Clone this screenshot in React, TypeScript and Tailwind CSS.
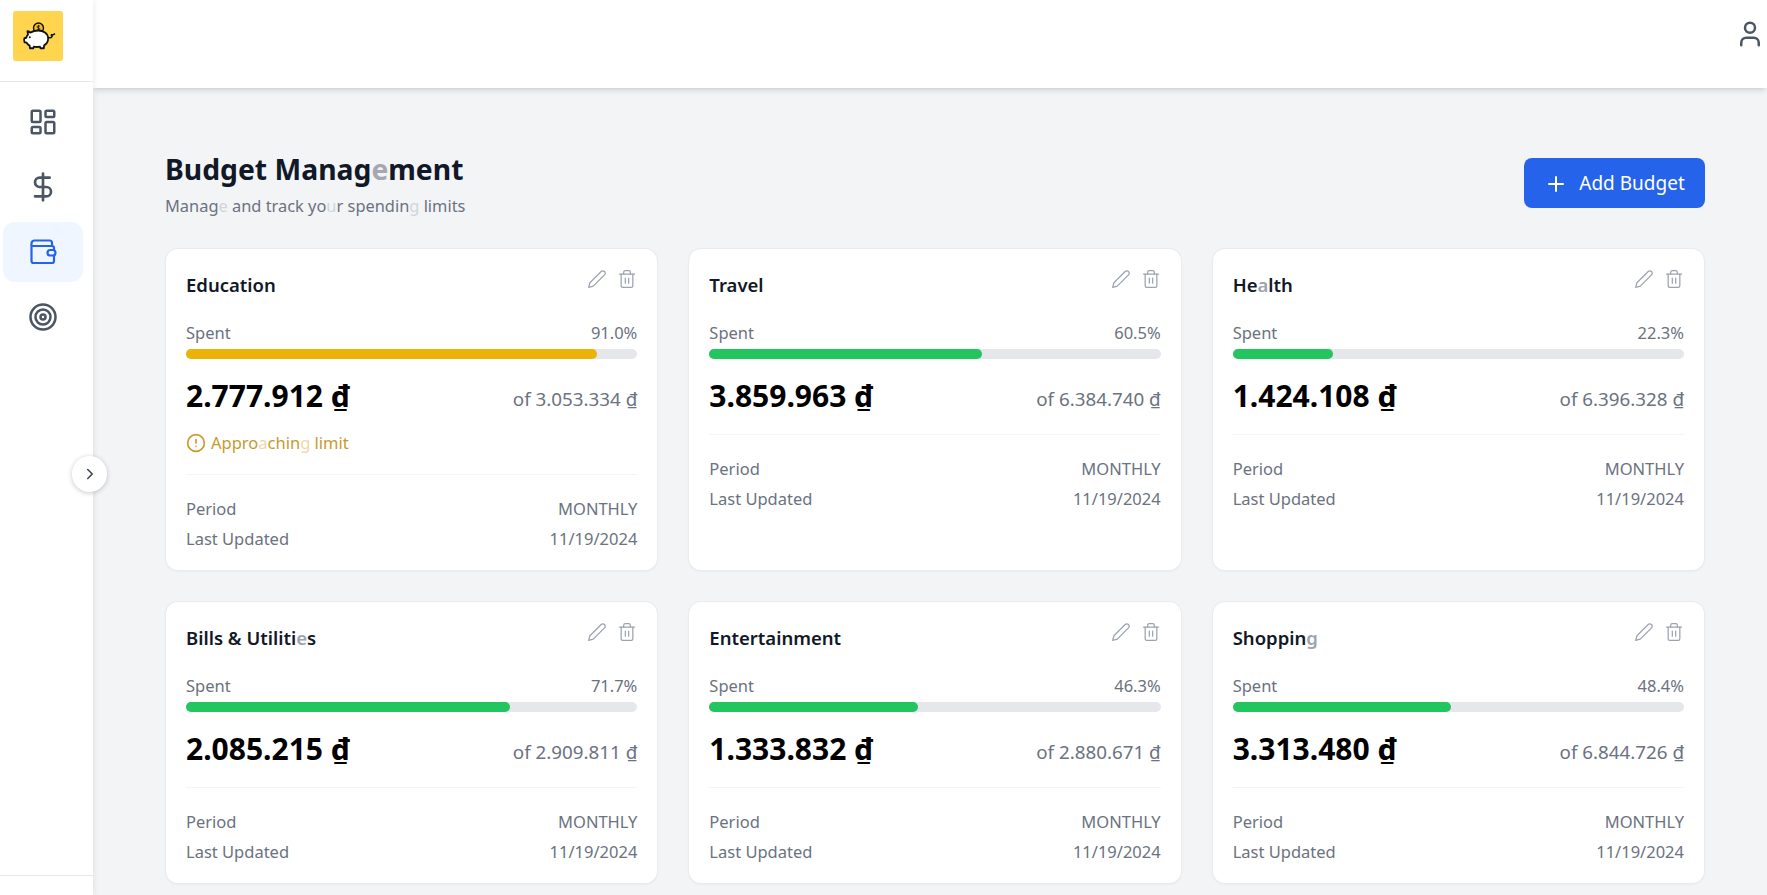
import { ChevronRight, CircleAlert, DollarSign, LayoutDashboard, Plus, Target, User } from "lucide-react";
import { FiEdit2, FiTrash2 } from "react-icons/fi";
import type { ReactNode } from "react";

function Dim({ c, children }: { c: string; children: ReactNode }) {
  return <span className={c}>{children}</span>;
}

function PiggyLogo() {
  return (
    <svg viewBox="0 0 50 50" className="w-[50px] h-[50px]">
      <circle cx="25.500" cy="17" r="5" fill="#f5b82e" stroke="#111" strokeWidth="1.400" />
      <path d="M25.500 14v6M27 15.300c-1-.7-3-.5-3 .7 0 1.400 3 .6 3 2 0 1.200-2 1.300-3 .5" fill="none" stroke="#111" strokeWidth="0.800" />
      <g transform="translate(6 2) scale(.8 .85)">
        <path
          d="M14 23c-1.200-1-2.400-1.500-3.500-1.500l.8 4c-1.200 1.100-1.900 2.300-2.300 3.600l-2.300.6c-.6 1.800-.4 3.400.2 4.700l2.700.5c.9 1.500 2.200 2.700 3.700 3.500l.4 3.100h4.200l.6-1.900c2.300.5 5.300.5 7.700 0l.6 1.900h4.200l.4-3.400c3.200-2 5.100-5 5-8.200-.1-6-6.100-9.300-12.400-9.300-3.700 0-7 .9-10 2.400z"
          fill="#fff"
          stroke="#111"
          strokeWidth="2.200"
          strokeLinejoin="round"
        />
        <path d="M37 29c2.300.6 4.300-.3 4.700-2.500.2-1.100-1.200-1.400-1.400-.4M41.500 26l3-1.300" fill="none" stroke="#111" strokeWidth="1.800" strokeLinecap="round" />
        <circle cx="13.500" cy="28.500" r="1.200" fill="#111" />
      </g>
    </svg>
  );
}

function WalletIcon() {
  return (
    <svg viewBox="0 0 28 28" fill="none" stroke="currentColor" strokeWidth="2.200" strokeLinejoin="round" className="w-[28px] h-[28px]">
      <path d="M2.500 8V5.500A3 3 0 0 1 5.500 2.500h15a2.500 2.500 0 0 1 2.500 2.500v3" />
      <path d="M2.500 8h20.500a2 2 0 0 1 2 2v13a2 2 0 0 1-2 2H4.500a2 2 0 0 1-2-2z" />
      <rect x="18.500" y="12" width="8" height="5.500" rx="2.750" fill="#eff6ff" />
    </svg>
  );
}

function NavItem({ active, children }: { active?: boolean; children: ReactNode }) {
  return (
    <div
      className={
        active
          ? "h-[60px] mx-[3px] w-[80px] rounded-xl bg-[#eff6ff] text-[#2563eb] flex items-center justify-center"
          : "h-[60px] mx-[3px] w-[80px] rounded-xl text-[#4b5563] flex items-center justify-center"
      }
    >
      {children}
    </div>
  );
}

function Sidebar() {
  return (
    <aside className="relative z-20 w-[93px] shrink-0 h-full bg-white flex flex-col shadow-[1px_0_6px_rgba(0,0,0,0.08)]">
      <div className="h-[82px] shrink-0 border-b border-[#e5e7eb] pl-[13px] pt-[11px]">
        <div className="w-[50px] h-[50px] rounded-[3px] bg-[#ffd54f]">
          <PiggyLogo />
        </div>
      </div>
      <nav className="flex flex-col gap-[5px] pt-[10px] flex-1">
        <NavItem>
          <LayoutDashboard size={30} strokeWidth={2} />
        </NavItem>
        <NavItem>
          <DollarSign size={32} strokeWidth={2} />
        </NavItem>
        <NavItem active>
          <WalletIcon />
        </NavItem>
        <NavItem>
          <Target size={30} strokeWidth={2} />
        </NavItem>
      </nav>
      <div className="h-[20px] shrink-0 border-t border-[#e5e7eb]" />
      <button className="absolute left-[72px] top-[456px] w-[35px] h-[36px] rounded-full bg-white shadow-[0_1px_5px_rgba(0,0,0,0.22)] flex items-center justify-center text-[#374151]">
        <ChevronRight size={18} strokeWidth={2} />
      </button>
    </aside>
  );
}

type Budget = {
  name: ReactNode;
  pct: string;
  width: string;
  spent: string;
  total: string;
  warn?: boolean;
};

const budgets: Budget[] = [
  { name: "Education", pct: "91.0%", width: "91%", spent: "2.777.912", total: "3.053.334", warn: true },
  { name: "Travel", pct: "60.5%", width: "60.5%", spent: "3.859.963", total: "6.384.740" },
  { name: <>He<Dim c="text-[#9ca3af]">a</Dim>lth</>, pct: "22.3%", width: "22.3%", spent: "1.424.108", total: "6.396.328" },
  { name: <>Bills &amp; Utiliti<Dim c="text-[#9ca3af]">e</Dim>s</>, pct: "71.7%", width: "71.7%", spent: "2.085.215", total: "2.909.811" },
  { name: "Entertainment", pct: "46.3%", width: "46.3%", spent: "1.333.832", total: "2.880.671" },
  { name: <>Shoppin<Dim c="text-[#9ca3af]">g</Dim></>, pct: "48.4%", width: "48.4%", spent: "3.313.480", total: "6.844.726" },
];

function BudgetCard({ b }: { b: Budget }) {
  return (
    <div className="bg-white rounded-xl shadow-[0_0_0_1px_#e9ebee,0_1px_3px_rgba(0,0,0,0.07)] px-[20px] pt-[14px] pb-[16px] flex flex-col">
      <div className="flex justify-between items-start h-[46px]">
        <h3 className="text-[18.500px] leading-[28px] font-semibold text-[#111827] pt-[8px]">{b.name}</h3>
        <div className="flex gap-[10px] text-[#9ca3af] pt-[6px]">
          <FiEdit2 size={20} strokeWidth={1.5} />
          <FiTrash2 size={20} strokeWidth={1.5} />
        </div>
      </div>
      <div className="flex justify-between text-[16.500px] leading-[24px] text-[#6b7280] mt-[12px]">
        <span>Spent</span>
        <span>{b.pct}</span>
      </div>
      <div className="h-[10px] rounded-full bg-[#e5e7eb] mt-[4px]">
        <div
          className={b.warn ? "h-full rounded-full bg-[#eab308]" : "h-full rounded-full bg-[#22c55e]"}
          style={{ width: b.width }}
        />
      </div>
      <div className="flex justify-between items-baseline mt-[17px]">
        <span className="text-[30px] leading-[40px] font-bold text-black">{b.spent} ₫</span>
        <span className="text-[18.800px] leading-[28px] text-[#6b7280] -translate-y-[1px]">of {b.total} ₫</span>
      </div>
      {b.warn && (
        <div className="flex items-center gap-[5px] text-[16.500px] leading-[24px] text-[#c79a2c] mt-[15px] mb-[1px]">
          <CircleAlert size={20} strokeWidth={2} />
          <span>
            Appro<Dim c="text-[#edd9a8]">a</Dim>chin<Dim c="text-[#edd9a8]">g</Dim> limit
          </span>
        </div>
      )}
      <div className="border-t border-[#f3f4f6] mt-[18px] pt-[19px] text-[16.500px] leading-[30px] text-[#6b7280]">
        <div className="flex justify-between">
          <span>Period</span>
          <span>MONTHLY</span>
        </div>
        <div className="flex justify-between">
          <span>Last Updated</span>
          <span>11/19/2024</span>
        </div>
      </div>
    </div>
  );
}

export default function App() {
  return (
    <div className="flex h-screen overflow-hidden bg-[#f3f4f6] font-['Noto_Sans',sans-serif]">
      <Sidebar />
      <div className="flex-1 min-w-0 flex flex-col">
        <header className="h-[88px] shrink-0 bg-white shadow-md flex justify-end items-start pt-[19px] pr-[2px] text-[#4b5563]">
          <User size={30} strokeWidth={2} />
        </header>
        <main className="pl-[73px] pr-[63px] pt-[70px]">
          <div className="flex justify-between items-start h-[91px]">
            <div className="-ml-[1px]">
              <h1 className="text-[28.300px] leading-[36px] font-bold text-[#111827] -mt-[7px]">
                Budget Manag<Dim c="text-[#a5a8b0]">e</Dim>ment
              </h1>
              <p className="text-[16.400px] leading-[24px] text-[#6b7280] mt-[7px]">
                Manag<Dim c="text-[#d1d5db]">e</Dim> and track yo<Dim c="text-[#d1d5db]">u</Dim>r spendin<Dim c="text-[#d1d5db]">g</Dim> limits
              </p>
            </div>
            <button className="w-[181px] h-[50px] -mr-[1px] pt-[1px] rounded-lg bg-[#2563eb] text-white text-[19px] flex items-center justify-center gap-[11px]">
              <Plus size={24} strokeWidth={2} />
              Add Budget
            </button>
          </div>
          <div className="grid grid-cols-3 gap-[32px]">
            {budgets.map((b, i) => (
              <BudgetCard key={i} b={b} />
            ))}
          </div>
        </main>
      </div>
    </div>
  );
}
